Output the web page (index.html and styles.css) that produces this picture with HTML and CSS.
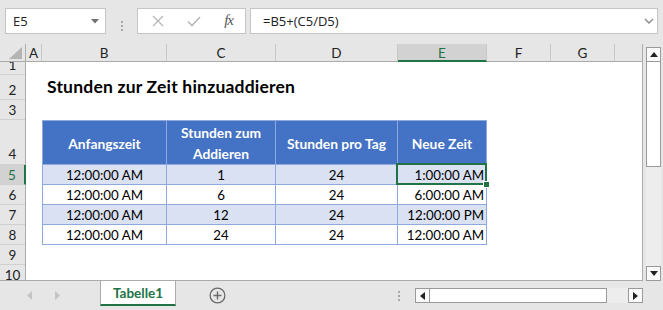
FILE: index.html
```html
<!DOCTYPE html>
<html lang="de">
<head>
    <meta charset="UTF-8">
    <meta name="viewport" content="width=device-width, initial-scale=1.0">
    <title>Stunden zur Zeit hinzuaddieren</title>
    <link rel="stylesheet" href="styles.css">
</head>
<body>

    <div class="formula-bar">
        <div class="name-box">
            <span>E5</span>
            <svg class="caret" width="8" height="5" viewBox="0 0 8 5"><path d="M0 0H8L4 4.5Z" fill="#707070"/></svg>
        </div>
        <div class="grip"><i></i><i></i><i></i></div>
        <div class="fx-buttons">
            <svg width="12" height="12" viewBox="0 0 12 12"><path d="M1 1L11 11M11 1L1 11" stroke="#b9b9b9" stroke-width="1.4" fill="none"/></svg>
            <svg width="14" height="12" viewBox="0 0 14 12"><path d="M1 6.5L5 10.5L13 2" stroke="#b9b9b9" stroke-width="1.6" fill="none"/></svg>
            <span class="fx">fx</span>
        </div>
        <div class="formula-input">
            <span>=B5+(C5/D5)</span>
            <svg class="chevron" width="10" height="6" viewBox="0 0 10 6"><path d="M1 1L5 5L9 1" stroke="#8a8a8a" stroke-width="1.4" fill="none"/></svg>
        </div>
    </div>

    <div class="sheet-area">
        <div class="sheet">
            <div class="corner"><svg width="13" height="12" viewBox="0 0 13 12"><path d="M13 0V12H0Z" fill="#b4b4b4"/></svg></div>

            <div class="col-heads">
                <div class="ch col-a">A</div>
                <div class="ch col-b">B</div>
                <div class="ch col-c">C</div>
                <div class="ch col-d">D</div>
                <div class="ch col-e active">E</div>
                <div class="ch col-f">F</div>
                <div class="ch col-g">G</div>
                <div class="ch col-rest"></div>
            </div>

            <div class="row-heads">
                <div class="rh r-1">1</div>
                <div class="rh r-2">2</div>
                <div class="rh">3</div>
                <div class="rh r-4">4</div>
                <div class="rh active">5</div>
                <div class="rh">6</div>
                <div class="rh">7</div>
                <div class="rh">8</div>
                <div class="rh">9</div>
                <div class="rh">10</div>
            </div>

            <div class="cells">
                <div class="title">Stunden zur Zeit hinzuaddieren</div>

                <div class="data-table">
                    <div class="th">Anfangszeit</div>
                    <div class="th">Stunden zum<br>Addieren</div>
                    <div class="th">Stunden pro Tag</div>
                    <div class="th">Neue Zeit</div>

                    <div class="td band">12:00:00 AM</div>
                    <div class="td band">1</div>
                    <div class="td band">24</div>
                    <div class="td band num sel">1:00:00 AM</div>

                    <div class="td">12:00:00 AM</div>
                    <div class="td">6</div>
                    <div class="td">24</div>
                    <div class="td num">6:00:00 AM</div>

                    <div class="td band">12:00:00 AM</div>
                    <div class="td band">12</div>
                    <div class="td band">24</div>
                    <div class="td band num">12:00:00 PM</div>

                    <div class="td">12:00:00 AM</div>
                    <div class="td">24</div>
                    <div class="td">24</div>
                    <div class="td num">12:00:00 AM</div>
                </div>
            </div>
        </div>

        <div class="vscroll">
            <div class="sb-btn"><svg width="8" height="5" viewBox="0 0 8 5"><path d="M0 5H8L4 0Z" fill="#222"/></svg></div>
            <div class="sb-thumb"></div>
            <div class="sb-track"></div>
            <div class="sb-btn"><svg width="8" height="5" viewBox="0 0 8 5"><path d="M0 0H8L4 5Z" fill="#222"/></svg></div>
        </div>
    </div>

    <div class="tab-bar">
        <div class="tab-nav">
            <svg width="5" height="9" viewBox="0 0 5 9"><path d="M5 0V9L0 4.5Z" fill="#c4c4c4"/></svg>
            <svg width="5" height="9" viewBox="0 0 5 9"><path d="M0 0V9L5 4.5Z" fill="#c4c4c4"/></svg>
        </div>
        <div class="tab">Tabelle1</div>
        <svg class="add-sheet" width="17" height="17" viewBox="0 0 17 17"><circle cx="8.5" cy="8.5" r="7.4" stroke="#6a6a6a" stroke-width="1.3" fill="none"/><path d="M8.5 4.5V12.5M4.5 8.5H12.5" stroke="#6a6a6a" stroke-width="1.4"/></svg>
        <div class="grip small"><i></i><i></i><i></i></div>
        <div class="hscroll">
            <div class="sb-btn"><svg width="5" height="8" viewBox="0 0 5 8"><path d="M5 0V8L0 4Z" fill="#222"/></svg></div>
            <div class="sb-thumb"></div>
            <div class="sb-track"></div>
            <div class="sb-btn"><svg width="5" height="8" viewBox="0 0 5 8"><path d="M0 0V8L5 4Z" fill="#222"/></svg></div>
        </div>
    </div>

</body>
</html>
```

FILE: styles.css
```css
* {
    box-sizing: border-box;
}

body {
    margin: 0;
    width: 663px;
    height: 310px;
    overflow: hidden;
    background-color: #e6e6e6;
    font-family: Lato, "Liberation Sans", sans-serif;
    color: #000;
}

/* formula bar */
.formula-bar {
    display: flex;
    height: 44px;
    padding: 8px 5px 0 5px;
}

.name-box,
.fx-buttons,
.formula-input {
    height: 26px;
    background-color: white;
    border: 1px solid #c6c6c6;
    display: flex;
    align-items: center;
}

.name-box {
    width: 101px;
    padding: 0 6px 0 7px;
    justify-content: space-between;
    font-family: "Open Sans", sans-serif;
    font-size: 13px;
    color: #222;
}

.grip {
    width: 31px;
    display: flex;
    flex-direction: column;
    align-items: center;
    justify-content: center;
    gap: 2px;
}

.grip i {
    display: block;
    width: 2px;
    height: 2px;
    background-color: #a8a8a8;
}

.fx-buttons {
    width: 109px;
    padding: 0 12px 0 14px;
    justify-content: space-between;
}

.fx {
    font-family: "Liberation Serif", serif;
    font-style: italic;
    font-size: 15px;
    color: #555;
    letter-spacing: -1px;
    margin-top: -2px;
}

.formula-input {
    width: 408px;
    margin-left: 4px;
    padding: 0 3px 0 12px;
    justify-content: space-between;
    font-family: "Open Sans", sans-serif;
    font-size: 13px;
    color: #222;
}

/* sheet */
.sheet-area {
    display: flex;
    height: 237px;
}

.sheet {
    width: 643px;
    height: 237px;
    display: grid;
    grid-template-columns: 26px 1fr;
    grid-template-rows: 18px 1fr;
    background-color: white;
    border-right: 1px solid #ababab;
    border-bottom: 1px solid #ababab;
    overflow: hidden;
}

.corner {
    background-color: #e6e6e6;
    border-right: 1px solid #ababab;
    border-bottom: 1px solid #ababab;
    display: flex;
    align-items: flex-end;
    justify-content: flex-end;
    padding: 0 3px 2px 0;
}

.col-heads {
    display: flex;
    background-color: #e6e6e6;
    border-bottom: 1px solid #ababab;
    font-size: 13.5px;
    color: #222;
}

.ch {
    border-right: 1px solid #c8c8c8;
    display: flex;
    align-items: center;
    justify-content: center;
    padding-top: 1px;
}

.col-a { width: 16px; }
.col-b { width: 125px; }
.col-c { width: 109px; }
.col-d { width: 122px; }
.col-e { width: 89px; }
.col-f { width: 64px; }
.col-g { width: 64px; }
.col-rest { flex: 1; border-right: none; }

.ch.active {
    background-color: #d2d2d2;
    color: #217346;
    border-bottom: 2px solid #217346;
    margin-bottom: -1px;
}

.row-heads {
    background-color: #e6e6e6;
    border-right: 1px solid #ababab;
    font-size: 13.5px;
    color: #222;
}

.rh {
    height: 20px;
    border-bottom: 1px solid #d0d0d0;
    display: flex;
    align-items: flex-end;
    justify-content: center;
    padding-bottom: 1px;
    overflow: hidden;
}

.rh.r-1 { height: 13px; align-items: flex-start; line-height: 6px; }
.rh.r-2 { height: 25px; }
.rh.r-4 { height: 45px; padding-bottom: 2px; }

.rh.active {
    background-color: #d2d2d2;
    color: #217346;
    border-right: 2px solid #217346;
    margin-right: -1px;
}

.cells {
    display: grid;
    grid-template-columns: 16px 125px 109px 122px 89px 64px 64px 1fr;
    grid-template-rows: 13px 25px 20px 45px 20px 20px 20px 20px 20px 20px;
}

.title {
    grid-row: 2;
    grid-column: 2 / -1;
    padding: 0 0 3px 5px;
    display: flex;
    align-items: flex-end;
    font-weight: bold;
    font-size: 17.5px;
    letter-spacing: 0.2px;
}

/* table */
.data-table {
    grid-row: 4 / 9;
    grid-column: 2 / 6;
    display: grid;
    grid-template-columns: 125px 109px 122px 89px;
    grid-template-rows: 45px repeat(4, 20px);
    font-size: 13.3px;
}

.th,
.td {
    border-right: 1px solid #8ea9db;
    border-bottom: 1px solid #8ea9db;
    display: flex;
    align-items: center;
    justify-content: center;
    text-align: center;
}

.th:first-child,
.td:nth-child(4n+1) {
    border-left: 1px solid #8ea9db;
}

.th {
    background-color: #4472c4;
    color: white;
    font-weight: bold;
    font-size: 13.8px;
    line-height: 21px;
    border-top: 1px solid #8ea9db;
    padding-top: 1px;
}

.td {
    padding-top: 1px;
}

.band {
    background-color: #d9e1f2;
}

.num {
    justify-content: flex-end;
    padding-right: 2px;
}

.sel {
    position: relative;
}

.sel::after {
    content: "";
    position: absolute;
    top: -2px;
    left: -2px;
    right: -1px;
    bottom: -1px;
    border: 2px solid #217346;
}

.sel::before {
    content: "";
    position: absolute;
    right: -4px;
    bottom: -4px;
    width: 5px;
    height: 5px;
    background-color: #217346;
    border: 1px solid white;
    z-index: 1;
}

/* scrollbars */
.vscroll {
    width: 15px;
    margin: 3px 0 0 3px;
    display: flex;
    flex-direction: column;
}

.sb-btn {
    width: 15px;
    height: 15px;
    background-color: #fafafa;
    border: 1px solid #9a9a9a;
    display: flex;
    align-items: center;
    justify-content: center;
    flex-shrink: 0;
}

.sb-thumb {
    background-color: white;
    border: 1px solid #9a9a9a;
    border-top: none;
}

.vscroll .sb-thumb {
    height: 105px;
}

.sb-track {
    flex: 1;
    background-color: #ededed;
}

.hscroll {
    width: 228px;
    height: 15px;
    margin-left: 13px;
    display: flex;
}

.hscroll .sb-thumb {
    width: 177px;
    border-top: 1px solid #9a9a9a;
    border-left: none;
}

/* tab bar */
.tab-bar {
    height: 29px;
    display: flex;
    align-items: center;
    padding-right: 20px;
}

.tab-nav {
    width: 100px;
    display: flex;
    gap: 23px;
    padding-left: 27px;
}

.tab {
    align-self: flex-start;
    width: 76px;
    height: 25px;
    background-color: white;
    border-left: 1px solid #ababab;
    border-right: 1px solid #ababab;
    border-bottom: 2px solid #217346;
    display: flex;
    align-items: center;
    justify-content: center;
    font-weight: bold;
    font-size: 13.5px;
    color: #217346;
}

.add-sheet {
    margin-left: 33px;
}

.grip.small {
    width: 6px;
    margin-left: auto;
}
```
